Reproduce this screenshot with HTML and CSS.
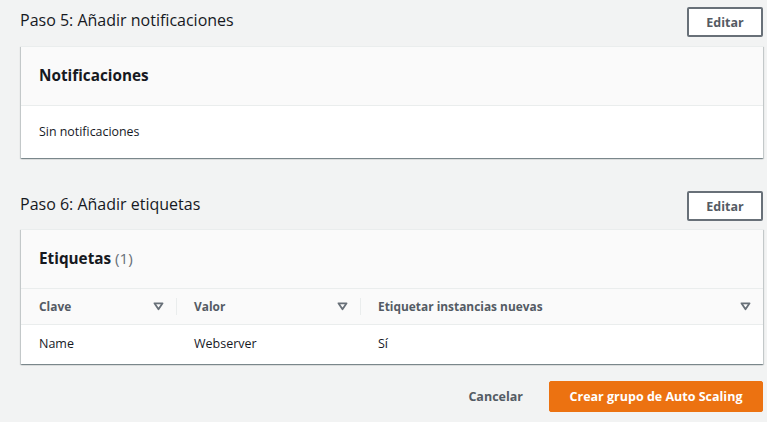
FILE: index.html
```html
<!DOCTYPE html>
<html lang="es">
<head>
<meta charset="utf-8">
<link rel="stylesheet" href="styles.css">
</head>
<body>
<div class="page">
  <section class="step step-5">
    <div class="step-head">
      <h2 class="step-title">Paso 5: Añadir notificaciones</h2>
      <button class="btn btn-normal">Editar</button>
    </div>
    <div class="card">
      <div class="card-header"><h3 class="card-title">Notificaciones</h3></div>
      <div class="card-body">Sin notificaciones</div>
    </div>
  </section>

  <section class="step step-6">
    <div class="step-head">
      <h2 class="step-title">Paso 6: Añadir etiquetas</h2>
      <button class="btn btn-normal">Editar</button>
    </div>
    <div class="card">
      <div class="card-header"><h3 class="card-title">Etiquetas <span class="count">(1)</span></h3></div>
      <div class="table">
        <div class="thead">
          <div class="th col-1"><span>Clave</span><svg class="sort" viewBox="0 0 12 10" width="11" height="9"><path d="M1.5 1.5h9L6 8z" fill="none" stroke="#687078" stroke-width="2" stroke-linejoin="round"/></svg></div>
          <div class="th col-2"><span>Valor</span><svg class="sort" viewBox="0 0 12 10" width="11" height="9"><path d="M1.5 1.5h9L6 8z" fill="none" stroke="#687078" stroke-width="2" stroke-linejoin="round"/></svg></div>
          <div class="th col-3"><span>Etiquetar instancias nuevas</span><svg class="sort" viewBox="0 0 12 10" width="11" height="9"><path d="M1.5 1.5h9L6 8z" fill="none" stroke="#687078" stroke-width="2" stroke-linejoin="round"/></svg></div>
        </div>
        <div class="tr">
          <div class="td col-1">Name</div>
          <div class="td col-2">Webserver</div>
          <div class="td col-3">Sí</div>
        </div>
      </div>
    </div>
  </section>

  <div class="actions">
    <button class="btn btn-link">Cancelar</button>
    <button class="btn btn-primary">Crear grupo de Auto Scaling</button>
  </div>
</div>
</body>
</html>
```

FILE: styles.css
```css
* { box-sizing: border-box; }
html, body { margin: 0; padding: 0; }
body {
  background: #f2f3f3;
  font-family: "Open Sans", "Liberation Sans", sans-serif;
  color: #16191f;
  width: 767px;
  height: 422px;
  overflow: hidden;
}
.page {
  padding: 7px 4px 0 21px;
}
.step-head {
  display: flex;
  align-items: center;
  justify-content: space-between;
  height: 30px;
  margin-bottom: 9px;
}
.step-title {
  margin: 0 0 5px -1px;
  font-size: 16px;
  font-weight: 400;
  line-height: 22px;
  color: #16191f;
}
.btn {
  font-family: "Open Sans", "Liberation Sans", sans-serif;
  font-weight: 700;
  font-size: 12.5px;
  cursor: pointer;
}
.btn-normal {
  width: 76px;
  height: 30px;
  background: #fff;
  border: 2px solid #687078;
  border-radius: 2px;
  color: #545b64;
  padding: 0;
}
.card {
  background: #fff;
  box-shadow: 0 1px 1px 0 rgba(0, 28, 36, 0.3), 1px 1px 1px 0 rgba(0, 28, 36, 0.15), -1px 1px 1px 0 rgba(0, 28, 36, 0.15);
  border-top: 1px solid #eaeded;
}
.card-header {
  background: #fafafa;
  height: 59px;
  border-bottom: 1px solid #eaeded;
  display: flex;
  align-items: center;
  padding: 0 18px 2px;
}
.card-title {
  margin: 0;
  font-size: 15.3px;
  font-weight: 700;
  line-height: 20px;
  color: #16191f;
}
.count {
  font-weight: 400;
  color: #687078;
}
.card-body {
  height: 52px;
  display: flex;
  align-items: center;
  padding: 0 18px 2px;
  font-size: 12.4px;
}
.step-6 { margin-top: 33px; }
.step-6 .step-head { margin-bottom: 8px; }
.thead, .tr {
  display: flex;
}
.thead {
  height: 36px;
  background: #fafafa;
  border-bottom: 1px solid #eaeded;
  align-items: center;
}
.th {
  display: flex;
  align-items: center;
  justify-content: space-between;
  font-size: 11.9px;
  font-weight: 700;
  color: #545b64;
  height: 100%;
  padding: 0 12px 1px 18px;
  position: relative;
}
.th + .th::before {
  content: "";
  position: absolute;
  left: 0;
  top: 9px;
  bottom: 9px;
  width: 1px;
  background: #eaeded;
}
.col-1 { width: 155px; }
.col-2 { width: 184px; }
.col-3 { flex: 1; }
.sort { display: block; }
.tr {
  height: 39px;
  align-items: center;
}
.td {
  font-size: 12.5px;
  padding: 0 18px 2px;
}
.actions {
  display: flex;
  justify-content: flex-end;
  align-items: center;
  margin-top: 17px;
  gap: 6px;
}
.btn-link {
  background: none;
  border: none;
  color: #545b64;
  height: 31px;
  padding: 0 20px;
}
.btn-primary {
  background: #ec7211;
  border: 1px solid #ec7211;
  color: #fff;
  height: 31px;
  width: 214px;
  border-radius: 2px;
  padding: 0;
}
```
